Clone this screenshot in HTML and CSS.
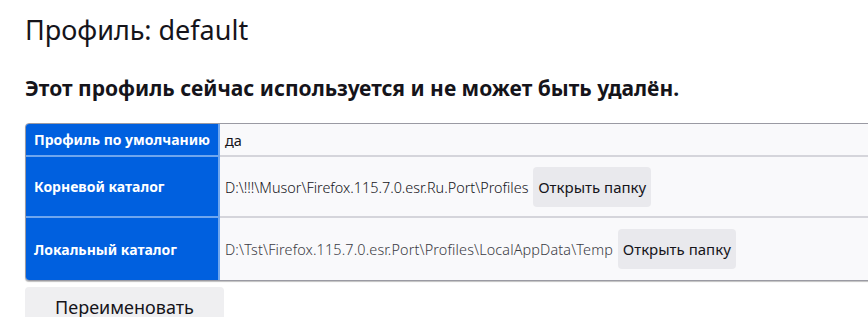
FILE: index.html
```html
<!DOCTYPE html>
<html lang="ru">
<head>
  <meta charset="UTF-8">
  <title>Профили</title>
  <link rel="stylesheet" href="styles.css">
</head>
<body>
  <div class="main">
    <h2 class="title">Профиль: default</h2>
    <h3 class="notice">Этот профиль сейчас используется и не может быть удалён.</h3>

    <table class="profile">
      <tr>
        <th>Профиль по умолчанию</th>
        <td>да</td>
      </tr>
      <tr>
        <th>Корневой каталог</th>
        <td>
          <span class="path">D:\!!!\Musor\Firefox.115.7.0.esr.Ru.Port\Profiles</span>
          <button class="open">Открыть папку</button>
        </td>
      </tr>
      <tr>
        <th>Локальный каталог</th>
        <td>
          <span class="path light">D:\Tst\Firefox.115.7.0.esr.Port\Profiles\LocalAppData\Temp</span>
          <button class="open">Открыть папку</button>
        </td>
      </tr>
    </table>

    <div class="btns">
      <button class="btn">Переименовать</button>
    </div>
  </div>
</body>
</html>
```

FILE: styles.css
```css
* {
  font-family: "Noto Sans", sans-serif;
}
html, body {
  overflow: hidden;
}
body {
  margin: 0;
  color: #15141a;
  background-color: white;
}
.main {
  padding: 0 25px;
  width: 1000px;
}
.title {
  margin: 12px 0 0;
  font-size: 27px;
  font-weight: normal;
  line-height: 36px;
}
.notice {
  margin: 26px 0 0;
  font-size: 21px;
  font-weight: bold;
  line-height: 28px;
}
.profile {
  margin-top: 21px;
  width: 960px;
  border: 1px solid #9a9aa3;
  border-radius: 4px;
  border-spacing: 0;
  box-shadow: 0 1px 1px rgba(0, 0, 0, 0.25);
  background-color: #f9f9fb;
  overflow: hidden;
}
.profile th {
  width: 178px;
  padding: 0 6px 0 8px;
  text-align: left;
  font-size: 14px;
  font-weight: bold;
  color: white;
  background-color: #0060df;
  border-right: 2px solid #6fa6ee;
  border-bottom: 2px solid #6fa6ee;
  white-space: nowrap;
}
.profile td {
  padding: 0 5px;
  font-size: 14.5px;
  border-bottom: 2px solid #d5d5db;
  white-space: nowrap;
}
.profile tr:first-child th,
.profile tr:first-child td {
  height: 31px;
}
.profile tr:last-child th,
.profile tr:last-child td {
  border-bottom: none;
  height: 62px;
}
.profile tr:nth-child(2) td,
.profile tr:nth-child(2) th {
  height: 59px;
}
.path {
  font-size: 14.4px;
  font-weight: 300;
  vertical-align: middle;
}
.light {
  color: #3b3b44;
  letter-spacing: 0.14px;
}
.open {
  margin-left: 1px;
  height: 40px;
  padding: 0 5px;
  font-size: 15px;
  color: #15141a;
  background-color: #e9e9ed;
  border: none;
  border-radius: 4px;
  vertical-align: middle;
}
.btns {
  margin-top: 6px;
}
.btn {
  width: 199px;
  height: 40px;
  font-size: 18px;
  color: #15141a;
  background-color: #efeff1;
  border: none;
  border-radius: 4px;
}
```
